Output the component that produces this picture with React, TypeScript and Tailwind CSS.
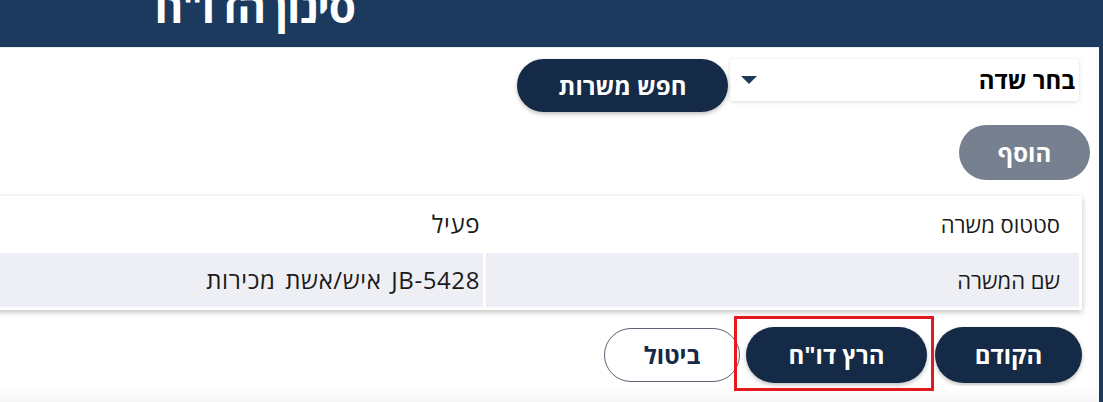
import React from 'react'

const rows = [
  { label: 'סטטוס משרה', value: 'פעיל', bg: 'bg-white' },
  { label: 'שם המשרה', value: 'JB-5428 איש/אשת מכירות', bg: 'bg-[#eeeff4]' },
]

function PillButton({ children, className = '' }: { children: React.ReactNode; className?: string }) {
  return (
    <button
      className={`rounded-full text-[24px] font-bold flex items-center justify-center shadow-[0_2px_4px_rgba(0,0,0,0.25)] ${className}`}
    >
      {children}
    </button>
  )
}

export default function App() {
  return (
    <div dir="rtl" className="w-[1103px] h-[402px] overflow-hidden flex bg-white font-['Open_Sans','DejaVu_Sans',sans-serif]">
      <div className="w-[4px] bg-[#1b3a5d]" />
      <div className="flex-1 flex flex-col">
        {/* header */}
        <div className="h-[48px] bg-[#1b3a5d] flex justify-end overflow-hidden border-b border-[#e9ecf0]">
          <div className="w-[355px] text-right">
            <h1 className="text-white font-bold text-[44px] leading-none -mt-[16px] tracking-tight">סינון הדו"ח</h1>
          </div>
        </div>

        {/* field picker */}
        <div className="flex items-start gap-[2px] pr-[20px] mt-[11px]">
          <div className="w-[349px] h-[42px] bg-white rounded-[4px] shadow-[0_1px_4px_rgba(0,0,0,0.15)] flex items-center justify-between pr-[4px] pl-[11px]">
            <span className="text-[24px] font-bold text-black">בחר שדה</span>
            <svg width="16" height="8" viewBox="0 0 16 8">
              <path d="M0 0 L16 0 L8 8 Z" fill="#1b3a5d" />
            </svg>
          </div>
          <PillButton className="w-[211px] h-[53px] bg-[#152a46] text-white text-[23px]">חפש משרות</PillButton>
        </div>

        <div className="flex pr-[9px] mt-[13px]">
          <PillButton className="w-[131px] h-[55px] bg-[#77808f] text-white shadow-none">הוסף</PillButton>
        </div>

        {/* selected fields */}
        <div className="pr-[17px] mt-[16px] -ml-[10px]">
          <div className="bg-white shadow-[0_2px_6px_rgba(0,0,0,0.25)] p-[3px] pt-[1px] grid grid-cols-[593px_1fr] gap-[3px] gap-y-[2px]">
            {rows.map((r) => (
              <React.Fragment key={r.label}>
                <div className={`${r.bg} h-[54px] flex items-center pr-[19px] text-[22px] text-[#1a1a1a]`}>{r.label}</div>
                <div className={`${r.bg} h-[54px] flex items-center pr-[3px] text-[24px] tracking-[0.6px] [word-spacing:3px] text-[#1a1a1a]`}>{r.value}</div>
              </React.Fragment>
            ))}
          </div>
        </div>

        {/* actions */}
        <div className="flex items-center pr-[17px] mt-[17px]">
          <PillButton className="w-[147px] h-[56px] bg-[#152a46] text-white">הקודם</PillButton>
          <div className="relative mr-[8px]">
            <PillButton className="w-[181px] h-[56px] bg-[#152a46] text-white">הרץ דו"ח</PillButton>
            <span className="absolute -top-[11px] -bottom-[8px] -right-[7px] -left-[12px] border-[3px] border-[#e3191f] pointer-events-none" />
          </div>
          <button className="mr-[6px] w-[136px] h-[54px] rounded-full border border-[#5a6473] bg-white text-[24px] font-bold text-[#152a46] flex items-center justify-center">
            ביטול
          </button>
        </div>

        <div className="flex-1 mt-[3px] bg-gradient-to-b from-white to-[#f7f7f8]" />
      </div>
    </div>
  )
}
